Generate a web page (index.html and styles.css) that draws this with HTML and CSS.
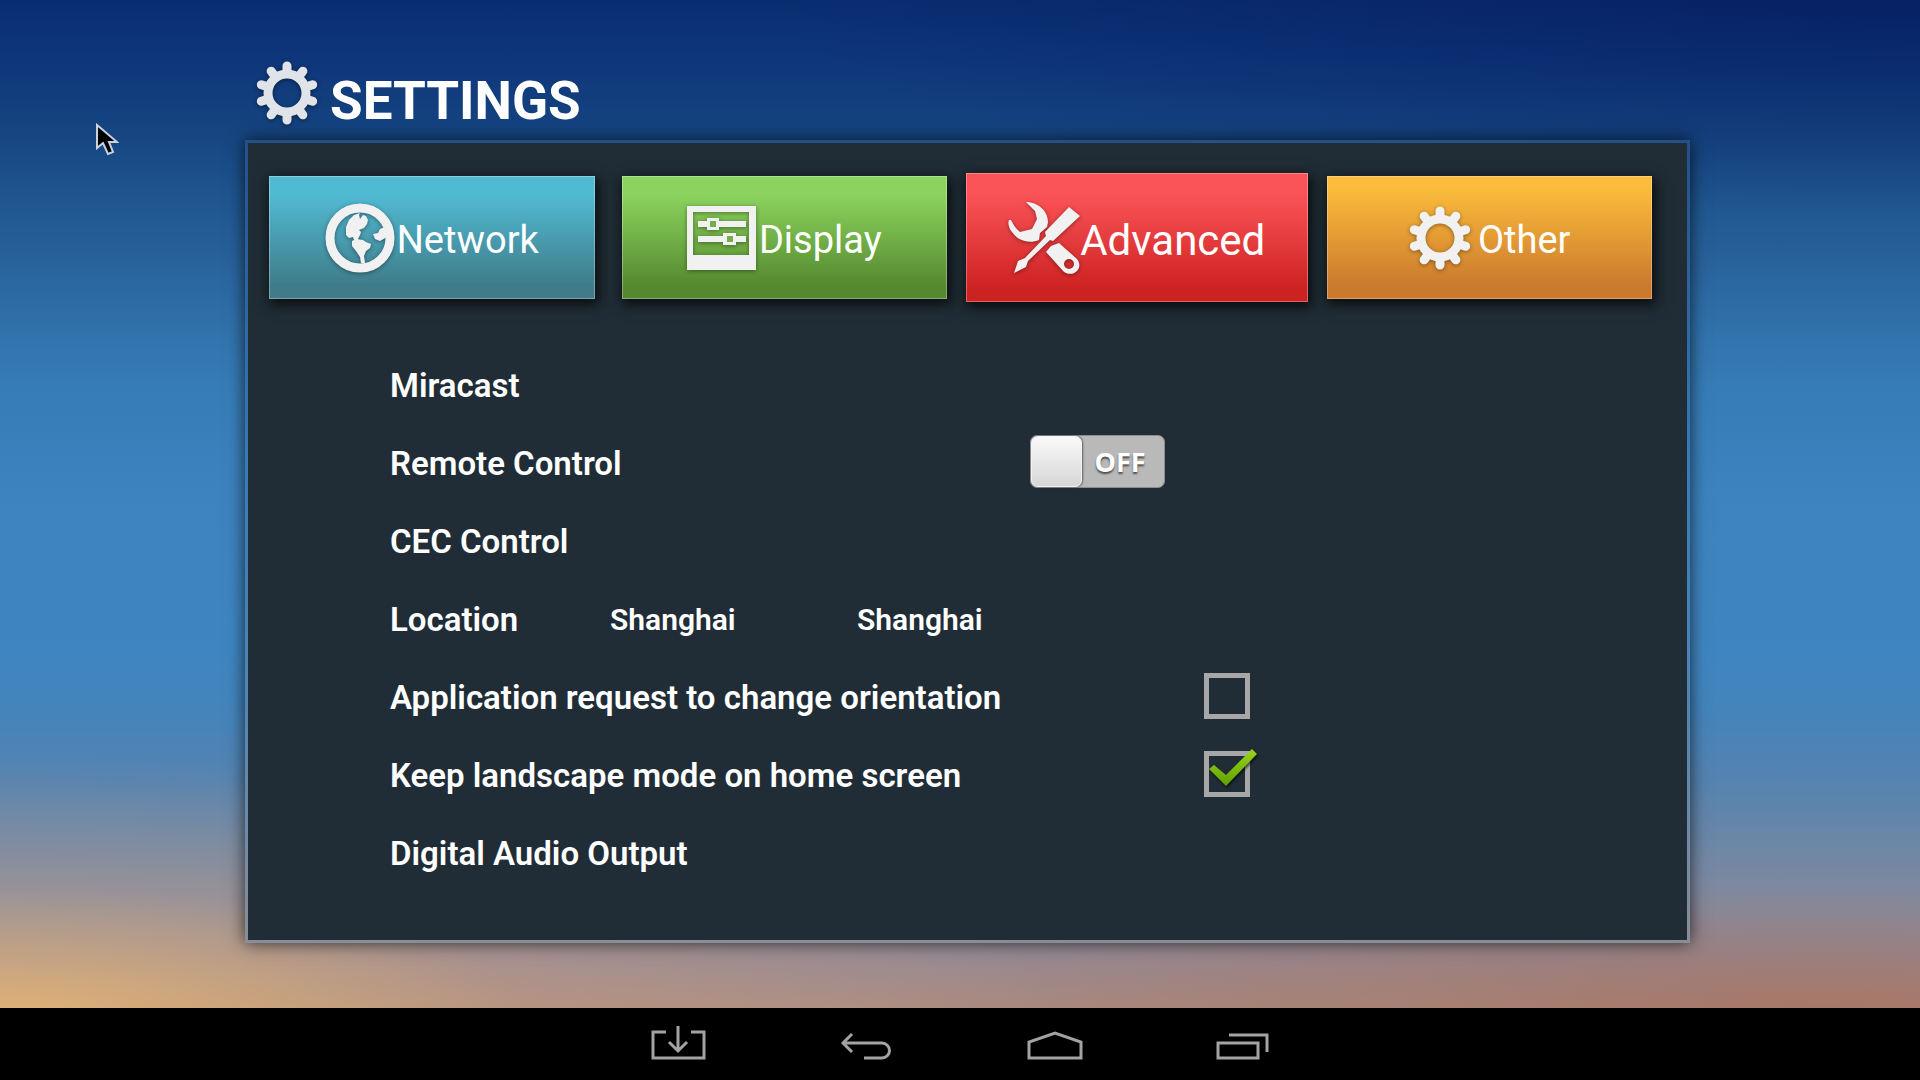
FILE: index.html
```
<!DOCTYPE html>
<html lang="en">

<head>
    <meta charset="UTF-8">
    <meta name="viewport" content="width=device-width, initial-scale=1.0">
    <title>Settings</title>
    <link rel="stylesheet" href="styles.css">
</head>

<body>
    <!-- shared icon shapes -->
    <svg class="defs" aria-hidden="true">
        <defs>
            <linearGradient id="green" x1="0" y1="0" x2="0" y2="1">
                <stop offset="0" stop-color="#9ad61c" />
                <stop offset="1" stop-color="#5f9f00" />
            </linearGradient>
            <symbol id="gear" viewBox="0 0 64 64">
                <circle cx="32" cy="32" r="19" fill="none" stroke="currentColor" stroke-width="9" />
                <g stroke="currentColor" stroke-width="9" stroke-linecap="round">
                    <path d="M32 10V5M32 54v5" />
                    <path d="M32 10V5M32 54v5" transform="rotate(36 32 32)" />
                    <path d="M32 10V5M32 54v5" transform="rotate(72 32 32)" />
                    <path d="M32 10V5M32 54v5" transform="rotate(108 32 32)" />
                    <path d="M32 10V5M32 54v5" transform="rotate(144 32 32)" />
                </g>
            </symbol>
        </defs>
    </svg>

    <main class="screen">
        <header class="title">
            <svg class="title-icon" viewBox="0 0 64 64"><use href="#gear" /></svg>
            <h1>SETTINGS</h1>
        </header>

        <section class="panel">
            <nav class="tabs">
                <button type="button" class="tab network">
                    <svg class="tab-icon" viewBox="0 0 70 70">
                        <circle cx="35" cy="35" r="30" fill="none" stroke="currentColor" stroke-width="9" />
                        <path fill="currentColor" d="M35 10L29 12L24 17L21 24V32L24 35L28 34L29 37L32 37L35 40L33 36L35 32L36 29L34 27L39 25L42 21L43 17L41 13L38 12L35 16L34 12Z" />
                        <path fill="currentColor" d="M27 38L31 36L38 37L41 39L46 41L45 45L41 48L39 53L40 60H36L35 54L31 48L27 43Z" />
                        <path fill="currentColor" d="M60 24L55 26L53 30L48 31L50 36L55 38L62 34Z" />
                    </svg>
                    <span>Network</span>
                </button>
                <button type="button" class="tab display">
                    <svg class="tab-icon" viewBox="0 0 70 70">
                        <path fill="currentColor" fill-rule="evenodd" d="M0 3H69V67H0ZM6 9V52H62V9Z" />
                        <path stroke="currentColor" stroke-width="6" d="M11 21H59M11 36H59" />
                        <path fill="currentColor" fill-rule="evenodd" d="M20 15H32V27H20ZM23 18V24H29V18Z" />
                        <path fill="currentColor" fill-rule="evenodd" d="M36 30H49V42H36ZM40 33V39H46V33Z" />
                        <path fill="#74ae4b" d="M23 18H29V24H23ZM40 33H46V39H40Z" />
                    </svg>
                    <span>Display</span>
                </button>
                <button type="button" class="tab advanced">
                    <svg class="tab-icon" viewBox="0 0 72 72">
                        <path fill="currentColor" d="M18 0C30 0 40 9 40 20L39 25L32 31L31 38C21 42 10 39 4 30C0 25 0 20 1 18L3 18C5 22 8 27 12 30L24 27L29 17L27 9Z" />
                        <path fill="currentColor" d="M61 5L72 14L45 39L42 38L20 59L18 65L6 71L10 59L17 56L38 34L37 30Z" />
                        <path fill="currentColor" fill-rule="evenodd" d="M38 50L43 44L51 41L69 57C76 66 66 76 56 70ZM61 57A5 5 0 1 0 61 67A5 5 0 1 0 61 57Z" />
                    </svg>
                    <span>Advanced</span>
                </button>
                <button type="button" class="tab other">
                    <svg class="tab-icon" viewBox="0 0 64 64"><use href="#gear" /></svg>
                    <span>Other</span>
                </button>
            </nav>

            <div class="options">
                <div class="row">Miracast</div>
                <div class="row">
                    <label class="label-switch" for="remote">Remote Control</label>
                    <span class="switch">
                        <input type="checkbox" id="remote">
                        <span class="knob"></span>
                        <span class="state">OFF</span>
                    </span>
                </div>
                <div class="row">CEC Control</div>
                <div class="row">
                    <span class="label-location">Location</span>
                    <span class="place">Shanghai</span>
                    <span class="place">Shanghai</span>
                </div>
                <div class="row">
                    <label class="label-check" for="orientation">Application request to change orientation</label>
                    <span class="check">
                        <input type="checkbox" id="orientation">
                        <svg class="tick" viewBox="0 0 48 38"><path fill="url(#green)" d="M0 20L5 16L17 26L43 0L48 5L17 37Z" /></svg>
                    </span>
                </div>
                <div class="row">
                    <label class="label-check" for="landscape">Keep landscape mode on home screen</label>
                    <span class="check">
                        <input type="checkbox" id="landscape" checked>
                        <svg class="tick" viewBox="0 0 48 38"><path fill="url(#green)" d="M0 20L5 16L17 26L43 0L48 5L17 37Z" /></svg>
                    </span>
                </div>
                <div class="row">Digital Audio Output</div>
            </div>
        </section>
    </main>

    <footer class="navbar">
        <button type="button" aria-label="Hide bar">
            <svg viewBox="0 0 56 36"><path d="M15 6H2V32H53V6H40M27 0V24M18 16L27 25L36 16" /></svg>
        </button>
        <button type="button" aria-label="Back">
            <svg viewBox="0 0 56 36"><path d="M13 8L4 17L13 26M4 17H43A7 7 0 0 1 43 32H25" /></svg>
        </button>
        <button type="button" aria-label="Home">
            <svg viewBox="0 0 56 36"><path d="M2 32V16L28 7L54 16V32Z" /></svg>
        </button>
        <button type="button" aria-label="Recent apps">
            <svg viewBox="0 0 56 36"><path d="M3 17H43V32H3ZM14 9H52V26" /></svg>
        </button>
    </footer>

    <svg class="cursor" viewBox="0 0 24 34" aria-hidden="true">
        <path d="M2 2V25L8 20L13 31L18 29L14 19H22Z" />
    </svg>
</body>

</html>
```
FILE: styles.css
```
* {
    box-sizing: border-box;
}

body {
    margin: 0;
    min-height: 100vh;
    display: flex;
    flex-direction: column;
    font-family: Roboto, Arial, sans-serif;
    color: #fff;
    background:
        radial-gradient(ellipse 60% 20% at 100% 0, rgba(0, 15, 80, 0.4), transparent),
        radial-gradient(ellipse 55% 24% at 0 94%, rgba(240, 190, 115, 0.75), rgba(220, 170, 130, 0.25) 50%, transparent),
        radial-gradient(ellipse 50% 12% at 95% 94%, rgba(165, 105, 85, 0.6), transparent),
        linear-gradient(#0a2d71 0, #0e367b 60px, #14427f 120px, #1f568f 200px, #28629b 260px, #3274ae 340px, #377eb9 400px, #3d83bf 500px, #3e86c1 650px, #4484bc 710px, #5583b0 780px, #6f87a5 850px, #868a9d 910px, #978992 960px, #a98c82 1008px);
}

.defs {
    position: absolute;
    width: 0;
    height: 0;
}

.screen {
    flex: 1;
    padding: 56px 230px 65px 245px;
    display: flex;
    flex-direction: column;
}

.title {
    display: flex;
    align-items: flex-start;
    gap: 11px;
    height: 84px;
    padding-left: 10px;
}

.title-icon {
    width: 64px;
    height: 64px;
    margin-top: 5px;
    color: #e0e3e8;
    filter: drop-shadow(0 1px 2px rgba(0, 0, 0, 0.5));
}

h1 {
    margin: 14px 0 0;
    font-size: 53px;
    line-height: 62px;
    font-weight: 700;
}

.panel {
    flex: 1;
    padding: 33px 35px 20px 21px;
    border: 3px solid;
    border-image: linear-gradient(#24508a, #3a7ab5 40%, #4f86b4 70%, #8a8d98) 1;
    background: #202d36;
    box-shadow: 0 0 16px rgba(0, 0, 0, 0.7);
}

.tabs {
    display: grid;
    grid-template-columns: repeat(4, 1fr);
    gap: 27px;
}

.tab {
    display: flex;
    align-items: center;
    justify-content: center;
    gap: 2px;
    height: 123px;
    padding: 0;
    border: 1px solid rgba(255, 255, 255, 0.3);
    background-origin: border-box;
    color: #fff;
    font-family: inherit;
    font-size: 38px;
    box-shadow: 2px 4px 12px 2px rgba(0, 0, 0, 0.7);
}

.tab span {
    padding-top: 5px;
}

.tab-icon {
    width: 70px;
    height: 70px;
    color: #f1f1f1;
    filter: drop-shadow(0 1px 2px rgba(0, 0, 0, 0.4));
}

.network {
    background-image: linear-gradient(#51bad3 15%, #3f7b88 90%);
}

.display {
    background-image: linear-gradient(#8bd35e 15%, #55892f 90%);
}

.advanced {
    height: 129px;
    margin: -3px -8px;
    gap: 0;
    font-size: 42px;
    background-image: linear-gradient(#fb5458 15%, #cd2222 90%);
}

.other {
    gap: 6px;
    background-image: linear-gradient(#fbbc3c 10%, #cb792d 90%);
}

.advanced .tab-icon {
    width: 72px;
    height: 72px;
}

.other .tab-icon {
    width: 64px;
    height: 64px;
}

.options {
    padding: 47px 0 0 121px;
}

.row {
    display: flex;
    align-items: center;
    height: 78px;
    font-size: 33px;
    font-weight: 600;
}

.label-switch {
    width: 640px;
}

.label-check {
    width: 814px;
}

.label-location {
    width: 220px;
}

.place {
    width: 247px;
    font-size: 30px;
}

.switch,
.check {
    position: relative;
    display: flex;
    margin-bottom: 3px;
}

.switch {
    width: 135px;
    height: 53px;
    border: 1px solid #8d8d8d;
    border-radius: 7px;
    background: #b9b9b9;
}

.switch input {
    position: absolute;
    inset: 0;
    width: 100%;
    height: 100%;
    margin: 0;
    opacity: 0;
}

.knob {
    width: 51px;
    border-radius: 7px;
    border: 1px solid #f4f4f4;
    background: linear-gradient(#fafafa, #d6d6d6);
    box-shadow: 1px 0 2px rgba(0, 0, 0, 0.5);
}

.state {
    flex: 1;
    padding-right: 6px;
    text-align: center;
    font-family: "Open Sans", sans-serif;
    font-size: 27px;
    line-height: 51px;
    font-weight: 700;
    text-shadow: 0 2px 2px rgba(0, 0, 0, 0.6);
}

.check input {
    appearance: none;
    width: 46px;
    height: 46px;
    margin: 0;
    border: 5px solid #a7a7a7;
}

.tick {
    display: none;
    position: absolute;
    left: 5px;
    top: -2px;
    width: 48px;
    height: 38px;
    overflow: visible;
    pointer-events: none;
    filter: drop-shadow(1px 2px 1px rgba(0, 0, 0, 0.6));
}

.check input:checked + .tick {
    display: block;
}

.navbar {
    display: flex;
    justify-content: center;
    gap: 132px;
    height: 72px;
    padding-left: 2px;
    background: #000;
}

.navbar button {
    display: flex;
    align-items: center;
    padding: 0;
    border: 0;
    background: none;
}

.navbar svg {
    width: 56px;
    height: 36px;
    fill: none;
    stroke: #a3a3a3;
    stroke-width: 3;
}

/* mouse pointer over the desktop */
.cursor {
    position: absolute;
    left: 95px;
    top: 123px;
    width: 24px;
    height: 34px;
    fill: #000;
    stroke: #c9d2e0;
    stroke-width: 2;
}
```
